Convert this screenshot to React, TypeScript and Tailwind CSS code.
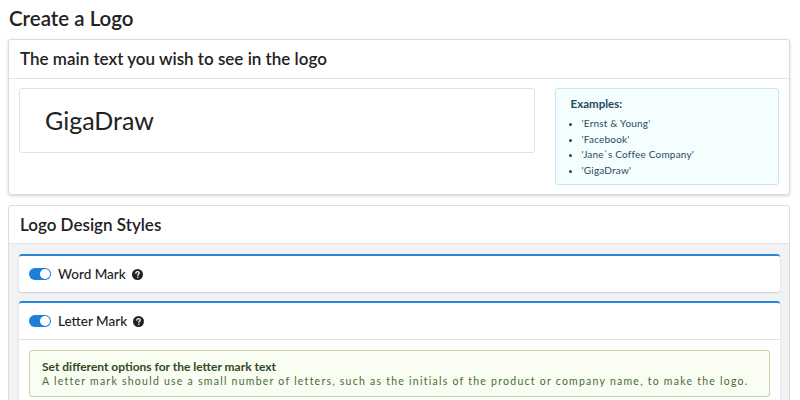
import React from "react";

const futura = { fontFamily: "Lato, 'Noto Sans', sans-serif" };

const Toggle = () => (
  <span className="relative inline-block w-[22px] h-[12px] rounded-full bg-[#1e7fd6]">
    <span className="absolute right-[1px] top-[1px] w-[10px] h-[10px] rounded-full bg-white" />
  </span>
);

const Help = () => (
  <svg width="11" height="11" viewBox="0 0 16 16" className="ml-[6px]">
    <circle cx="8" cy="8" r="8" fill="#222" />
    <path d="M5.6 6.1c0-1.4 1-2.3 2.5-2.3s2.4.9 2.4 2c0 1.8-2 1.7-2 3.3" fill="none" stroke="#fff" strokeWidth="1.9" strokeLinecap="round" />
    <circle cx="8.5" cy="12" r="1.1" fill="#fff" />
  </svg>
);

const App = () => {
  return (
    <div className="w-[800px] h-[400px] overflow-hidden bg-white text-[#222]" style={futura}>
      <h1 className="pl-[9px] pt-[5px] h-[39px] text-[20.5px] leading-[26px] font-semibold text-[#222]">
        Create a Logo
      </h1>

      <div className="mx-2 w-[782px] border border-[#dcdcdc] rounded-[3px] bg-white shadow-[0_1px_3px_rgba(0,0,0,0.18)]">
        <div className="h-[39px] px-[11px] flex items-center border-b border-[#e3e3e3] text-[17px] font-semibold">
          The main text you wish to see in the logo
        </div>
        <div className="flex gap-5 px-[10px] pt-[9px] pb-[9px]">
          <div className="w-[517px] h-[65px] border border-[#e1e1e1] rounded-[3px] flex items-center pl-[25px] text-[25px] text-[#222]" style={{ fontFamily: "Lato, sans-serif" }}>
            GigaDraw
          </div>
          <div className="w-[225px] h-[97px] border border-[#c8e6ee] rounded-[3px] bg-[#f5feff] pl-[15px] pt-[8px] text-[#1f4a5f]">
            <p className="text-[11.5px] font-bold leading-[14px]">Examples:</p>
            <ul className="mt-[5px] pl-[11px] list-disc text-[10px] leading-[15.7px] tracking-[0.2px]">
              <li>'Ernst &amp; Young'</li>
              <li>'Facebook'</li>
              <li>'Jane`s Coffee Company'</li>
              <li>'GigaDraw'</li>
            </ul>
          </div>
        </div>
      </div>

      <div className="mx-2 mt-[10px] w-[782px] border border-[#dcdcdc] rounded-[3px] bg-white">
        <div className="h-[38px] px-[11px] flex items-center border-b border-[#e3e3e3] text-[17px] font-semibold">
          Logo Design Styles
        </div>
        <div className="bg-[#f1f2f4] pl-[10px] pr-[9px] pt-[10px] pb-4 flex flex-col gap-[9px]">
          <div className="bg-white border-t-2 border-t-[#2a86d8] rounded-[3px] shadow-[0_1px_2px_rgba(0,0,0,0.15)]">
            <div className="h-[36px] pl-[10px] flex items-center gap-[7px] text-[13.5px] font-medium">
              <Toggle />
              <span className="flex items-center">Word Mark<Help /></span>
            </div>
          </div>
          <div className="bg-white border-t-2 border-t-[#2a86d8] rounded-[3px] shadow-[0_1px_2px_rgba(0,0,0,0.15)]">
            <div className="h-[37px] pl-[10px] flex items-center gap-[7px] text-[13.5px] font-medium border-b border-[#e3e3e3]">
              <Toggle />
              <span className="flex items-center">Letter Mark<Help /></span>
            </div>
            <div className="px-[10px] pt-[10px] pb-[10px]">
              <div className="h-[47px] border border-[#bcd8a8] rounded-[3px] bg-[#f9fdf2] px-[12px] pt-[8px] text-[#4a6a36]">
                <p className="text-[12px] font-bold leading-[15px] text-[#2f4a1f]">Set different options for the letter mark text</p>
                <p className="text-[10.5px] leading-[14px] tracking-[1.25px]">
                  A letter mark should use a small number of letters, such as the initials of the product or company name, to make the logo.
                </p>
              </div>
            </div>
          </div>
        </div>
      </div>
    </div>
  );
};

export default App;
